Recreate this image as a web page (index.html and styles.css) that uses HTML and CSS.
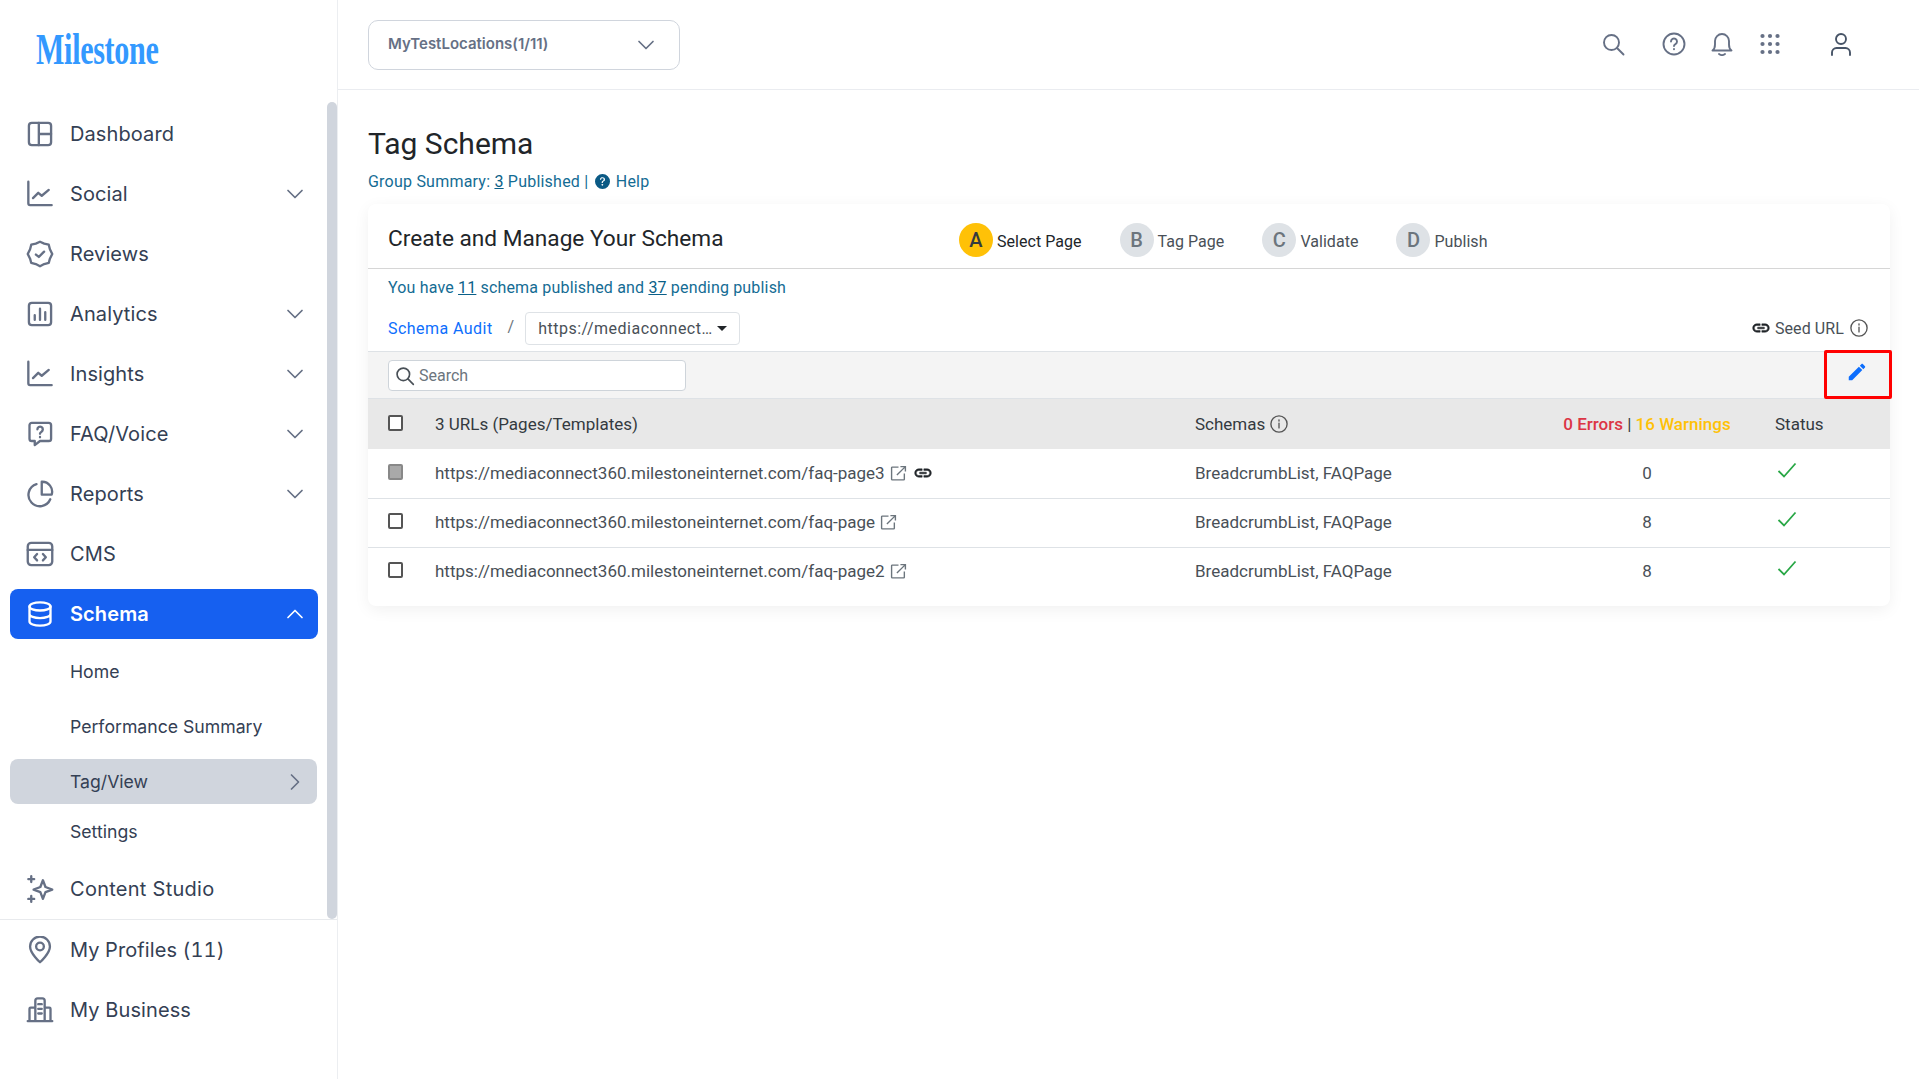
FILE: index.html
```html
<!DOCTYPE html>
<html lang="en">
<head>
<meta charset="utf-8">
<title>Tag Schema</title>
<link rel="stylesheet" href="styles.css">
</head>
<body>
<svg class="sprite" xmlns="http://www.w3.org/2000/svg">
  <symbol id="chev-down" viewBox="0 0 24 24"><path d="M5 8.500l7 7 7-7"/></symbol>
  <symbol id="chev-up" viewBox="0 0 24 24"><path d="M5 15.500l7-7 7 7"/></symbol>
  <symbol id="chev-right" viewBox="0 0 24 24"><path d="M8.500 5l7 7-7 7"/></symbol>
  <symbol id="trend" viewBox="0 0 24 24"><path d="M2 1.500V20a1.500 1.500 0 0 0 1.500 1.500H22"/><path d="M6 15.500l4.500-4.500 3 2.500 6-5"/></symbol>
  <symbol id="external" viewBox="0 0 16 16"><path d="M8 2H2.200a.7.7 0 0 0-.7.7v10.600c0 .4.300.7.7.7h10.600c.4 0 .7-.3.7-.7V8"/><path d="M6.500 9.500L14 2M9.800 1.500h4.700v4.700"/></symbol>
  <symbol id="link" viewBox="0 0 24 24"><path d="M3.900 12c0-1.710 1.390-3.100 3.100-3.100h4V7H7c-2.760 0-5 2.240-5 5s2.240 5 5 5h4v-1.900H7c-1.710 0-3.100-1.390-3.100-3.100zM8 13h8v-2H8v2zm9-6h-4v1.900h4c1.710 0 3.100 1.390 3.100 3.100s-1.390 3.100-3.100 3.100h-4V17h4c2.760 0 5-2.240 5-5s-2.240-5-5-5z"/></symbol>
  <symbol id="info" viewBox="0 0 16 16"><circle cx="8" cy="8" r="7.200"/><path d="M8 7.200v4.300"/><path d="M8 4.300v1"/></symbol>
  <symbol id="tick" viewBox="0 0 20 16"><path d="M1.500 9l5.500 5.500L18.500 1.500"/></symbol>
</svg>

<div class="app">
  <aside class="sidebar">
    <div class="logo"><span class="logo-text">Milestone</span></div>
    <nav class="nav">
      <a class="item"><svg class="ico" viewBox="0 0 24 24"><rect x="2.500" y="2.500" width="19" height="19" rx="2.500"/><path d="M11 2.500v19M11 12h10.500"/></svg><span>Dashboard</span></a>
      <a class="item"><svg class="ico"><use href="#trend"/></svg><span>Social</span><svg class="chev"><use href="#chev-down"/></svg></a>
      <a class="item"><svg class="ico" viewBox="0 0 24 24"><path d="M12 1.500l3.600 1.600 3.900.9 1 3.900L22.500 12l-2 4-1 3.700-3.900.9-3.600 1.900-3.600-1.900-3.900-.9-1-3.700-2-4 2-4.100 1-3.900 3.900-.9z"/><path d="M8.500 12.500l2.500 2 4.500-4.500"/></svg><span>Reviews</span></a>
      <a class="item"><svg class="ico" viewBox="0 0 24 24"><rect x="2.500" y="2.500" width="19" height="19" rx="2.500"/><path d="M7.500 17v-4M12 17V7.500M16.500 17v-6.500"/></svg><span>Analytics</span><svg class="chev"><use href="#chev-down"/></svg></a>
      <a class="item"><svg class="ico"><use href="#trend"/></svg><span>Insights</span><svg class="chev"><use href="#chev-down"/></svg></a>
      <a class="item"><svg class="ico" viewBox="0 0 24 24"><path d="M5 2.500h14.500a2 2 0 0 1 2 2v11.500a2 2 0 0 1-2 2H12l-4.500 3.500V18H5a2 2 0 0 1-2-2V4.500a2 2 0 0 1 2-2z"/><path d="M9.800 8a2.300 2.300 0 1 1 3.500 2c-.8.500-1.300.9-1.300 1.800M12 14.500v.3"/></svg><span>FAQ/Voice</span><svg class="chev"><use href="#chev-down"/></svg></a>
      <a class="item"><svg class="ico" viewBox="0 0 24 24"><path d="M9 3.500A9.700 9.700 0 1 0 20.800 16.500"/><path d="M13.500 1.500a8.500 8.500 0 0 1 8.500 11h-8.500z"/></svg><span>Reports</span><svg class="chev"><use href="#chev-down"/></svg></a>
      <a class="item"><svg class="ico" viewBox="0 0 24 24"><rect x="1.500" y="2.500" width="21" height="19" rx="3"/><path d="M1.500 8.500h21M9.500 12l-2.500 2.800 2.500 2.700M14.500 12l2.500 2.800-2.500 2.700"/></svg><span>CMS</span></a>
      <a class="item active"><svg class="ico" viewBox="0 0 24 24"><ellipse cx="12" cy="5.500" rx="9" ry="3.500"/><path d="M3 5.500v13C3 20.500 7 22 12 22s9-1.500 9-3.500v-13M3 12c0 2 4 3.500 9 3.500s9-1.500 9-3.500"/></svg><span>Schema</span><svg class="chev"><use href="#chev-up"/></svg></a>
      <div class="sub">
        <a class="sub-item">Home</a>
        <a class="sub-item tall">Performance Summary</a>
        <a class="sub-item current"><span>Tag/View</span><svg class="chev"><use href="#chev-right"/></svg></a>
        <a class="sub-item tall">Settings</a>
      </div>
      <a class="item wide"><svg class="ico" viewBox="0 0 24 24"><path d="M14.500 4.500l2.200 5.800 5.800 2.200-5.800 2.200-2.200 5.800-2.200-5.800-5.800-2.200 5.800-2.200z"/><path d="M4.500 1v5M2 3.500h5M4.500 18v5M2 20.500h5"/></svg><span>Content Studio</span></a>
    </nav>
    <div class="nav-bottom">
      <a class="item"><svg class="ico" viewBox="0 0 24 24"><path d="M12 22.500s8.500-7.500 8.500-13.500a8.500 8.500 0 0 0-17 0c0 6 8.500 13.500 8.500 13.500z"/><circle cx="12" cy="9" r="3.300"/></svg><span class="tabular">My Profiles (11)</span></a>
      <a class="item"><svg class="ico" viewBox="0 0 24 24"><path d="M1.500 21.500h21M8 21.500V4a2 2 0 0 1 2-2h4a2 2 0 0 1 2 2v17.500M8 10H4a1 1 0 0 0-1 1v10.500M16 10h4a1 1 0 0 1 1 1v10.500M10.500 7h3M10.500 11h3M10.500 15h3"/></svg><span>My Business</span></a>
    </div>
    <div class="scroll-thumb"></div>
  </aside>

  <div class="main">
    <header class="topbar">
      <div class="loc"><span class="loc-name">MyTestLocations(1/11)</span><svg class="chev"><use href="#chev-down"/></svg></div>
      <div class="top-icons">
        <svg class="top-ico" viewBox="0 0 24 24"><circle cx="10.500" cy="10.500" r="7.500"/><path d="M16 16l6.500 6.500"/></svg>
        <svg class="top-ico" viewBox="0 0 24 24"><circle cx="12" cy="12" r="10.500"/><path d="M9 9.500a3 3 0 1 1 4.500 2.600c-1 .6-1.500 1-1.500 2M12 17v.3"/></svg>
        <svg class="top-ico" viewBox="0 0 24 24"><path d="M2.500 18.500c1.800-1.200 2.500-3 2.500-6V9a7 7 0 0 1 14 0v3.500c0 3 .7 4.800 2.500 6z"/><path d="M9 22c1.600 1.200 4.400 1.200 6 0"/></svg>
        <svg class="top-ico grid" viewBox="0 0 24 24"><circle cx="4.500" cy="4" r="2.100"/><circle cx="12" cy="4" r="2.100"/><circle cx="19.500" cy="4" r="2.100"/><circle cx="4.500" cy="12" r="2.100"/><circle cx="12" cy="12" r="2.100"/><circle cx="19.500" cy="12" r="2.100"/><circle cx="4.500" cy="20" r="2.100"/><circle cx="12" cy="20" r="2.100"/><circle cx="19.500" cy="20" r="2.100"/></svg>
        <svg class="top-ico user" viewBox="0 0 24 24"><circle cx="12" cy="7" r="5"/><path d="M3 23v-2.500a4.500 4.500 0 0 1 4.500-4.500h9a4.500 4.500 0 0 1 4.500 4.500V23"/></svg>
      </div>
    </header>

    <main class="content">
      <h1 class="title">Tag Schema</h1>
      <p class="summary">Group Summary: <u>3</u> Published | <svg class="help-ico" viewBox="0 0 16 16"><path d="M16 8A8 8 0 1 1 0 8a8 8 0 0 1 16 0zM5.496 6.033h.825c.138 0 .248-.113.266-.25.09-.656.54-1.134 1.342-1.134.686 0 1.314.343 1.314 1.168 0 .635-.374.927-.965 1.371-.673.489-1.206 1.06-1.168 1.987l.003.217a.25.25 0 0 0 .25.246h.811a.25.25 0 0 0 .25-.25v-.105c0-.718.273-.927 1.01-1.486.609-.463 1.244-.977 1.244-2.056 0-1.511-1.276-2.241-2.673-2.241-1.267 0-2.655.59-2.75 2.286a.237.237 0 0 0 .241.247zm2.325 6.443c.61 0 1.029-.394 1.029-.927 0-.552-.42-.94-1.029-.94-.584 0-1.009.388-1.009.94 0 .533.425.927 1.01.927z"/></svg> Help</p>

      <section class="card">
        <div class="card-head">
          <h2 class="card-title">Create and Manage Your Schema</h2>
          <ol class="steps">
            <li class="step on"><span class="badge">A</span>Select Page</li>
            <li class="step"><span class="badge">B</span>Tag Page</li>
            <li class="step"><span class="badge">C</span>Validate</li>
            <li class="step"><span class="badge">D</span>Publish</li>
          </ol>
        </div>
        <p class="stats">You have <u>11</u> schema published and <u>37</u> pending publish</p>
        <div class="crumbs">
          <a class="crumb-link">Schema Audit</a>
          <span class="crumb-sep">/</span>
          <div class="crumb-select"><span>https://mediaconnect…</span><i class="caret"></i></div>
          <div class="seed"><svg class="seed-link"><use href="#link"/></svg><span>Seed URL</span><svg class="seed-info"><use href="#info"/></svg></div>
        </div>
        <div class="toolbar">
          <div class="search"><svg class="search-ico" viewBox="0 0 24 24"><circle cx="10" cy="10" r="7.500"/><path d="M15.500 15.500L22 22"/></svg><span>Search</span></div>
          <div class="highlight"><svg class="pencil" viewBox="0 0 24 24"><path d="M3 17.250V21h3.750L17.810 9.940l-3.750-3.750L3 17.250zM20.710 7.040c.39-.39.39-1.020 0-1.410l-2.340-2.340c-.39-.39-1.020-.39-1.410 0l-1.830 1.830 3.750 3.750 1.830-1.830z"/></svg></div>
        </div>
        <div class="row head">
          <div class="cell-check"><i class="check"></i></div>
          <div>3 URLs (Pages/Templates)</div>
          <div class="schemas-h">Schemas <svg class="head-info"><use href="#info"/></svg></div>
          <div class="counts"><span class="err">0 Errors</span> | <span class="warn">16 Warnings</span></div>
          <div>Status</div>
        </div>
        <div class="row first">
          <div class="cell-check"><i class="check filled"></i></div>
          <div class="url">https://mediaconnect360.milestoneinternet.com/faq-page3<svg class="ext"><use href="#external"/></svg><svg class="url-link"><use href="#link"/></svg></div>
          <div>BreadcrumbList, FAQPage</div>
          <div class="counts">0</div>
          <div><svg class="tick"><use href="#tick"/></svg></div>
        </div>
        <div class="row">
          <div class="cell-check"><i class="check"></i></div>
          <div class="url">https://mediaconnect360.milestoneinternet.com/faq-page<svg class="ext"><use href="#external"/></svg></div>
          <div>BreadcrumbList, FAQPage</div>
          <div class="counts">8</div>
          <div><svg class="tick"><use href="#tick"/></svg></div>
        </div>
        <div class="row">
          <div class="cell-check"><i class="check"></i></div>
          <div class="url">https://mediaconnect360.milestoneinternet.com/faq-page2<svg class="ext"><use href="#external"/></svg></div>
          <div>BreadcrumbList, FAQPage</div>
          <div class="counts">8</div>
          <div><svg class="tick"><use href="#tick"/></svg></div>
        </div>
      </section>
    </main>
  </div>
</div>
</body>
</html>
```

FILE: styles.css
```css
* { box-sizing: border-box; }
html, body { margin: 0; height: 100%; overflow: hidden; background: #fff; }
body { font-family: Roboto, "Liberation Sans", sans-serif; font-size: 16px; color: #212529; }
.sprite { display: none; }
svg { flex: none; }

.app { display: flex; height: 1079px; }

/* Sidebar */
.sidebar { position: relative; width: 338px; flex: none; border-right: 1px solid #eceef1; font-family: Inter, "Liberation Sans", sans-serif; color: #344054; }
.logo { height: 102px; padding: 25px 0 0 36px; }
.logo-text { display: inline-block; font-family: "Liberation Serif", serif; font-weight: 700; font-size: 44px; line-height: 50px; color: #3399ff; transform: scaleX(.685); transform-origin: 0 50%; letter-spacing: -.5px; }
.nav { padding: 2px 0 0 10px; height: 817px; width: 100%; }
.nav-bottom { border-top: 1px solid #e8eaed; padding-left: 10px; }
.item { display: flex; align-items: center; gap: 16px; width: 308px; height: 60px; padding-left: 16px; font-size: 20px; letter-spacing: .1px; }
.item.wide { letter-spacing: .27px; }
.tabular { font-variant-numeric: tabular-nums; }
.ico { width: 28px; height: 28px; fill: none; stroke: #667085; stroke-width: 2; stroke-linecap: round; stroke-linejoin: round; }
.chev { width: 24px; height: 24px; margin-left: auto; margin-right: 11px; fill: none; stroke: #667085; stroke-width: 1.700; stroke-linecap: round; stroke-linejoin: round; }
.item.active { height: 50px; margin: 5px 0; background: #1660f0; border-radius: 8px; color: #fff; font-weight: 600; }
.item.active .ico, .item.active .chev { stroke: #fff; }
.sub { padding-top: 0; }
.sub-item { display: flex; align-items: center; height: 55px; width: 307px; padding-left: 60px; font-size: 17.650px; }
.sub-item.current { height: 45px; margin-top: 5px; background: #d0d5dd; border-radius: 8px; }
.sub-item.current .chev { margin-right: 10px; }
.scroll-thumb { position: absolute; top: 102px; right: 0; width: 10px; height: 817px; background: #d0d5dd; border-radius: 5px; }

/* Main */
.main { flex: 1; min-width: 0; }
.topbar { display: flex; align-items: center; height: 90px; padding: 0 66px 0 30px; border-bottom: 1px solid #eaecf0; }
.loc { display: flex; align-items: center; width: 312px; height: 50px; padding: 0 20px 0 19px; border: 1px solid #d0d5dd; border-radius: 10px; font-family: Inter, "Liberation Sans", sans-serif; }
.loc-name { font-size: 15px; font-weight: 600; color: #667085; position: relative; top: -1px; }
.loc .chev { margin-right: 1px; }
.top-icons { display: flex; align-items: center; margin-left: auto; position: relative; top: -1px; }
.top-ico { width: 24px; height: 24px; fill: none; stroke: #667085; stroke-width: 1.900; stroke-linecap: round; stroke-linejoin: round; margin-left: 24px; }
.top-ico:nth-child(2) { margin-left: 37px; }
.top-ico.grid { fill: #667085; stroke: none; }
.top-ico.user { margin-left: 47px; stroke: #475467; }

.content { padding: 36px 29px 0 30px; }
.title { margin: 0; font-size: 30px; font-weight: 400; line-height: 36px; color: #212529; }
.summary { margin: 8px 0 10px; line-height: 24px; color: #146c94; white-space: nowrap; letter-spacing: .22px; }
.summary u { color: #0b5f88; }
.help-ico { width: 15px; height: 15px; fill: #0b5a85; vertical-align: -2px; margin: 0 2px 0 2px; }

.card { background: #fff; border-radius: 8px; box-shadow: 0 4px 16px rgba(0, 0, 0, .06); height: 402px; }
.card-head { display: flex; align-items: center; height: 65px; padding-left: 20px; border-bottom: 1px solid #d6d6d6; }
.card-title { margin: 0; width: 571px; font-size: 22.650px; font-weight: 450; color: #212529; position: relative; top: 2px; }
.steps { display: flex; gap: 38px; margin: 0; padding: 0; list-style: none; position: relative; top: 5px; letter-spacing: .04px; }
.step { display: flex; align-items: center; gap: 4px; color: #495057; }
.step.on { color: #212529; }
.badge { display: flex; align-items: center; justify-content: center; width: 34px; height: 34px; border-radius: 50%; background: #dee2e6; color: #6c757d; font-size: 20px; font-weight: 500; position: relative; top: -1px; }
.step.on .badge { background: #ffc107; color: #343a40; }
.stats { margin: 0; height: 36px; padding-left: 20px; line-height: 38px; color: #146c94; letter-spacing: .17px; }
.stats u { color: #0b5f88; }
.crumbs { display: flex; align-items: center; height: 46px; padding: 0 22px 0 20px; }
.crumb-link { color: #0d6efd; letter-spacing: .45px; }
.crumb-sep { margin: -4px 11px 0 15px; color: #6c757d; }
.crumb-select { display: flex; align-items: center; justify-content: space-between; width: 215px; height: 33px; padding: 0 12px; border: 1px solid #dee2e6; border-radius: 4px; color: #495057; letter-spacing: .5px; }
.caret { width: 0; height: 0; border: 5px solid transparent; border-top-color: #212529; border-bottom: 0; }
.seed { display: flex; align-items: center; margin-left: auto; color: #495057; letter-spacing: .1px; }
.seed-link { width: 20px; height: 20px; margin-right: 4px; fill: #212529; stroke: #212529; stroke-width: .6; }
.seed-info { width: 18px; height: 18px; margin-left: 6px; fill: none; stroke: #555; stroke-width: 1.200; stroke-linecap: round; }

.toolbar { position: relative; height: 48px; padding: 8px 20px 0; background: #f4f4f4; border-top: 1px solid #dee2e6; border-bottom: 1px solid #dee2e6; }
.search { display: flex; align-items: center; gap: 4px; width: 298px; height: 31px; padding-left: 6px; background: #fff; border: 1px solid #ced4da; border-radius: 4px; color: #6c757d; }
.search-ico { width: 20px; height: 20px; fill: none; stroke: #495057; stroke-width: 2; stroke-linecap: round; }
.highlight { position: absolute; top: -2px; right: -2px; display: flex; align-items: center; justify-content: center; width: 68px; height: 49px; border: 3.500px solid #ff0000; border-radius: 2px; padding: 0 2px 5px 0; }
.pencil { width: 22px; height: 22px; fill: #0d6efd; }

.row { display: grid; grid-template-columns: 67px 760px 368px 212px 1fr; align-items: center; height: 49px; padding-bottom: 2px; border-top: 1px solid #dee2e6; color: #495057; font-size: 17px; }
.row.first { border-top: 0; padding-bottom: 1px; }
.row.head { height: 50px; padding-bottom: 0; background: #e8e8e8; border-top: 0; color: #343a40; }
.cell-check { padding-left: 20px; display: flex; }
.check { display: block; width: 15px; height: 16px; border: 2px solid #555; border-radius: 2px; background: #fff; position: relative; top: -1px; }
.check.filled { background: #a9a9a9; border-color: #888; }
.schemas-h { display: flex; align-items: center; gap: 5px; }
.head-info { width: 18px; height: 18px; fill: none; stroke: #555; stroke-width: 1.200; stroke-linecap: round; }
.counts { padding-right: 44px; text-align: center; }
.err { color: #dc3545; font-weight: 500; }
.warn { color: #ffc107; font-weight: 500; }
.url { display: flex; align-items: center; }
.ext { width: 17px; height: 17px; margin-left: 5px; fill: none; stroke: #6c757d; stroke-width: 1.300; }
.url-link { width: 20px; height: 20px; margin-left: 6px; fill: #212529; stroke: #212529; stroke-width: .6; }
.tick { display: block; width: 20px; height: 16px; margin: -7px 0 0 2px; fill: none; stroke: #28a745; stroke-width: 1.800; }
```
